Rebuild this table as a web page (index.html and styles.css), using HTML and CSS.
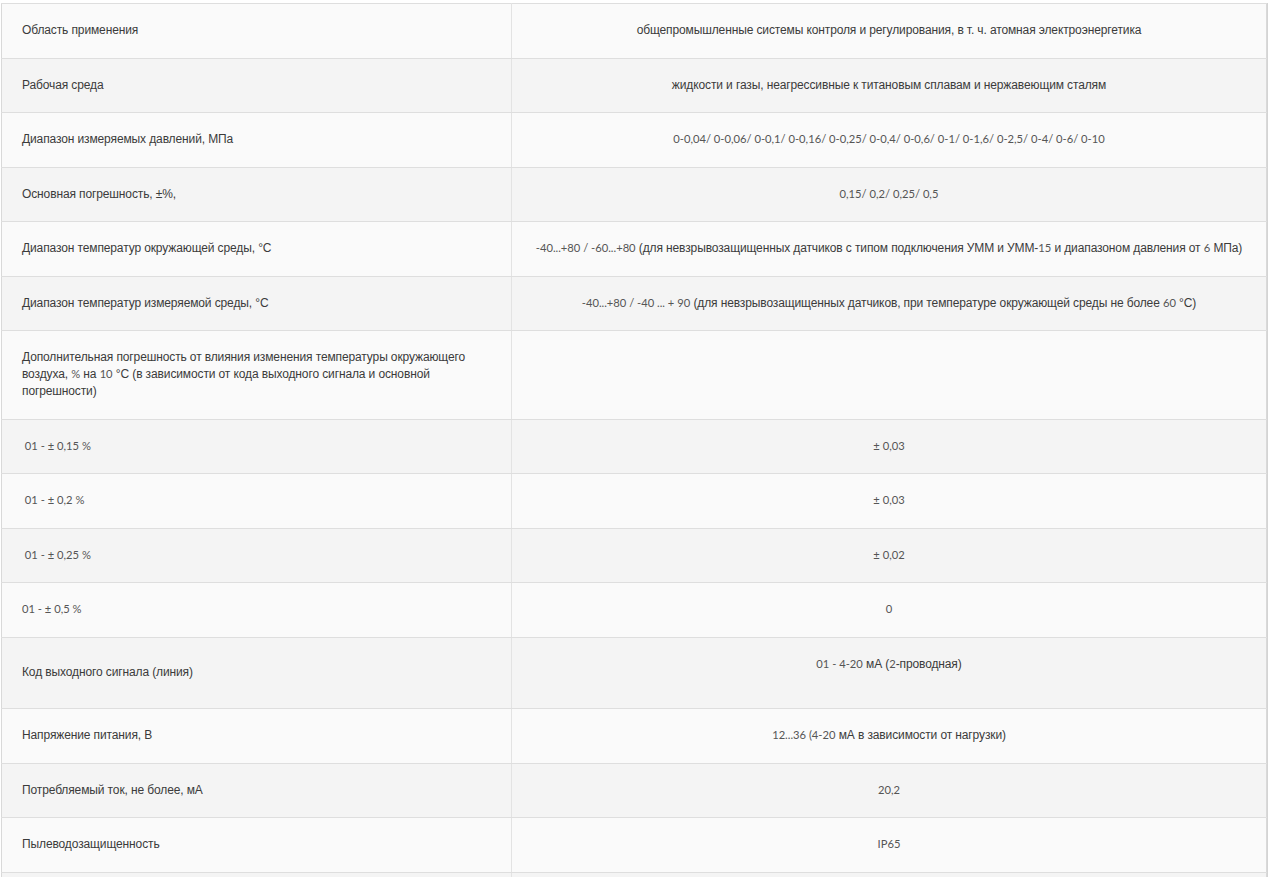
FILE: index.html
```html
<!DOCTYPE html>
<html lang="ru">
<head>
    <meta charset="UTF-8">
    <meta name="viewport" content="width=device-width, initial-scale=1.0">
    <title>Технические характеристики</title>
    <link rel="stylesheet" href="styles.css">
</head>
<body>
    <div class="specs">
        <table class="spec-table">
            <tr>
                <td class="label">Область применения</td>
                <td class="value">общепромышленные системы контроля и регулирования, в т. ч. атомная электроэнергетика</td>
            </tr>
            <tr>
                <td class="label">Рабочая среда</td>
                <td class="value">жидкости и газы, неагрессивные к титановым сплавам и нержавеющим сталям</td>
            </tr>
            <tr>
                <td class="label">Диапазон измеряемых давлений, МПа</td>
                <td class="value"><span class="n">0-0,04/ 0-0,06/ 0-0,1/ 0-0,16/ 0-0,25/ 0-0,4/ 0-0,6/ 0-1/ 0-1,6/ 0-2,5/ 0-4/ 0-6/ 0-10</span></td>
            </tr>
            <tr>
                <td class="label">Основная погрешность, ±%,</td>
                <td class="value"><span class="n">0,15/ 0,2/ 0,25/ 0,5</span></td>
            </tr>
            <tr>
                <td class="label">Диапазон температур окружающей среды, °С</td>
                <td class="value"><span class="n">-40...+80 / -60...+80</span> (для невзрывозащищенных датчиков с типом подключения УММ и УММ-<span class="n">15</span> и диапазоном давления от <span class="n">6</span> МПа)</td>
            </tr>
            <tr>
                <td class="label">Диапазон температур измеряемой среды, °С</td>
                <td class="value"><span class="n">-40...+80 / -40 ... + 90</span> (для невзрывозащищенных датчиков, при температуре окружающей среды не более <span class="n">60</span> °С)</td>
            </tr>
            <tr>
                <td class="label top">Дополнительная погрешность от влияния изменения температуры окружающего воздуха, <span class="n">%</span> на <span class="n">10</span> °С (в зависимости от кода выходного сигнала и основной погрешности)</td>
                <td class="value"></td>
            </tr>
            <tr>
                <td class="label"><span class="n">&nbsp;01 - ± 0,15 %</span></td>
                <td class="value"><span class="n">± 0,03</span></td>
            </tr>
            <tr>
                <td class="label"><span class="n">&nbsp;01 - ± 0,2 %</span></td>
                <td class="value"><span class="n">± 0,03</span></td>
            </tr>
            <tr>
                <td class="label"><span class="n">&nbsp;01 - ± 0,25 %</span></td>
                <td class="value"><span class="n">± 0,02</span></td>
            </tr>
            <tr>
                <td class="label"><span class="n">01 - ± 0,5 %</span></td>
                <td class="value"><span class="n">0</span></td>
            </tr>
            <tr>
                <td class="label">Код выходного сигнала (линия)</td>
                <td class="value top"><span class="n">01 - 4-20</span> мА (<span class="n">2</span>-проводная)<br>&nbsp;</td>
            </tr>
            <tr>
                <td class="label">Напряжение питания, В</td>
                <td class="value"><span class="n">12...36 (4-20</span> мА в зависимости от нагрузки)</td>
            </tr>
            <tr>
                <td class="label">Потребляемый ток, не более, мА</td>
                <td class="value"><span class="n">20,2</span></td>
            </tr>
            <tr>
                <td class="label">Пылеводозащищенность</td>
                <td class="value"><span class="n">IP65</span></td>
            </tr>
            <tr>
                <td class="label">&nbsp;</td>
                <td class="value"></td>
            </tr>
        </table>
    </div>
</body>
</html>
```

FILE: styles.css
```css
body {
    margin: 0;
    background: #fff;
    font-family: "Liberation Sans", Arial, sans-serif;
    font-size: 12px;
    letter-spacing: -0.12px;
    color: #3b3b3b;
}
.specs {
    margin: 3px 4px 0 1px;
    border-right: 1px solid #d4d4d4;
}
.spec-table {
    width: 100%;
    border-collapse: collapse;
    border: 1px solid #d9d9d9;
}
.spec-table td {
    padding: 18px 20px 18.5px;
    line-height: 17px;
    border-top: 1px solid #dedede;
    border-bottom: 1px solid #dedede;
    vertical-align: middle;
}
.spec-table tr:nth-child(odd) td {
    background: #fafafa;
}
.spec-table tr:nth-child(even) td {
    background: #f4f4f4;
}
.spec-table .label {
    width: 469px;
    text-align: left;
    border-right: 1px solid #e3e3e3;
}
.spec-table .value {
    text-align: center;
}
.spec-table .top {
    vertical-align: top;
}
.n {
    font-family: Lato, "Liberation Sans", sans-serif;
    font-size: 11.2px;
    line-height: 14px;
    letter-spacing: 0;
    color: #555;
}
```
